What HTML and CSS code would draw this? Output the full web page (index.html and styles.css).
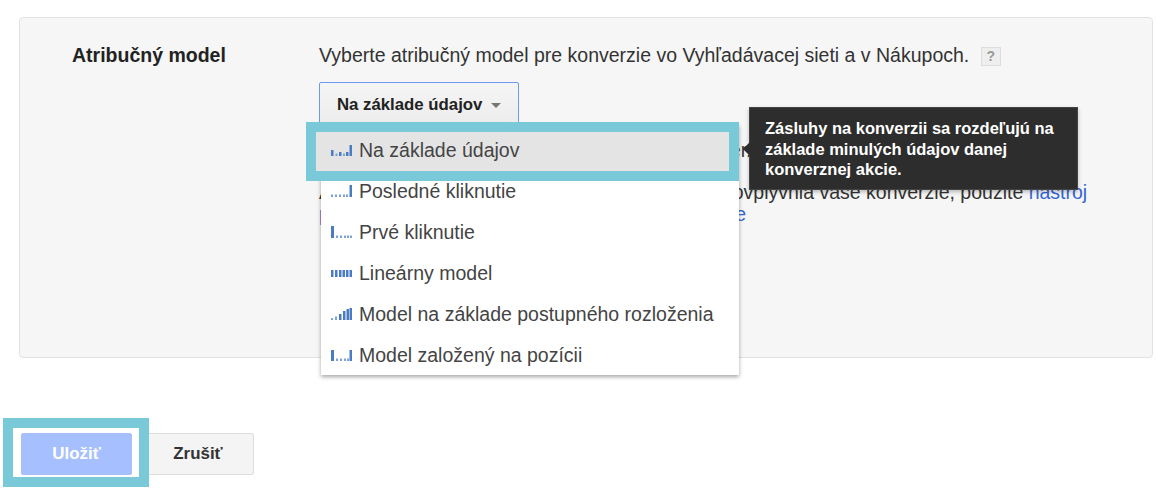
FILE: index.html
```html
<!DOCTYPE html>
<html lang="sk">
<head>
    <meta charset="UTF-8">
    <meta name="viewport" content="width=device-width, initial-scale=1.0">
    <title>Atribučný model</title>
    <link rel="stylesheet" href="styles.css">
</head>
<body>
    <div class="panel">
        <div class="panel-label">Atribučný model</div>
        <div class="panel-body">
            <div class="intro">
                Vyberte atribučný model pre konverzie vo Vyhľadávacej sieti a v Nákupoch.
                <span class="help">?</span>
            </div>
            <div class="dropdown">
                <button class="dropdown-btn">Na základe údajov <span class="caret"></span></button>

                <ul class="menu">
                    <li class="menu-item active">
                        <svg class="bars" viewBox="0 0 21 12"><rect x="0" y="6" width="2.500" height="6"/><rect class="dot" x="4.500" y="9.500" width="2" height="2.500"/><rect x="8" y="8" width="2.500" height="4"/><rect class="dot" x="12" y="9.500" width="2" height="2.500"/><rect x="15" y="8" width="2.500" height="4"/><rect x="18.500" y="1" width="2.500" height="11"/></svg>
                        Na základe údajov
                    </li>
                    <li class="menu-item">
                        <svg class="bars" viewBox="0 0 21 12"><rect class="dot" x="0" y="9.500" width="2" height="2.500"/><rect class="dot" x="4" y="9.500" width="2" height="2.500"/><rect class="dot" x="8" y="9.500" width="2" height="2.500"/><rect class="dot" x="12" y="9.500" width="2" height="2.500"/><rect class="dot" x="15" y="9.500" width="2" height="2.500"/><rect x="18.500" y="0" width="2.500" height="12"/></svg>
                        Posledné kliknutie
                    </li>
                    <li class="menu-item">
                        <svg class="bars" viewBox="0 0 21 12"><rect x="0" y="0" width="3" height="12"/><rect class="dot" x="5" y="9.500" width="2" height="2.500"/><rect class="dot" x="9" y="9.500" width="2" height="2.500"/><rect class="dot" x="13" y="9.500" width="2" height="2.500"/><rect class="dot" x="16" y="9.500" width="2" height="2.500"/><rect class="dot" x="19" y="9.500" width="2" height="2.500"/></svg>
                        Prvé kliknutie
                    </li>
                    <li class="menu-item">
                        <svg class="bars" viewBox="0 0 21 12"><rect x="0" y="3" width="2.500" height="7"/><rect x="4" y="3" width="2.500" height="7"/><rect x="8" y="3" width="2.500" height="7"/><rect x="11.500" y="3" width="2.500" height="7"/><rect x="15" y="3" width="2.500" height="7"/><rect x="18.500" y="3" width="2.500" height="7"/></svg>
                        Lineárny model
                    </li>
                    <li class="menu-item">
                        <svg class="bars" viewBox="0 0 21 12"><rect class="dot" x="0" y="10" width="2" height="2"/><rect class="dot" x="4" y="8.500" width="2" height="3.500"/><rect x="8" y="6" width="2.500" height="6"/><rect x="12" y="3" width="2.500" height="9"/><rect x="15.500" y="1" width="2.500" height="11"/><rect x="18.500" y="0" width="2.500" height="12"/></svg>
                        Model na základe postupného rozloženia
                    </li>
                    <li class="menu-item">
                        <svg class="bars" viewBox="0 0 21 12"><rect x="0" y="1" width="3" height="11"/><rect class="dot" x="5" y="9.500" width="2" height="2.500"/><rect class="dot" x="9" y="9.500" width="2" height="2.500"/><rect class="dot" x="13" y="9.500" width="2" height="2.500"/><rect class="dot" x="16" y="9.500" width="2" height="2.500"/><rect x="18.500" y="1" width="2.500" height="11"/></svg>
                        Model založený na pozícii
                    </li>
                </ul>

                <div class="tooltip">Zásluhy na konverzii sa rozdeľujú na základe minulých údajov danej konverznej akcie.</div>
            </div>
            <p class="note note-first">Atribučný model určuje, ako sa zásluhy za konverzie rozdelia <a href="#">medzi kliknutia</a></p>
            <p class="note">Ak chcete zistiť, ako by rôzne atribučné modely ovplyvňia vaše konverzie, použite <a href="#">nástroj porovnania atribučných modelov na ich konverzie</a></p>
        </div>
    </div>

    <div class="actions">
        <button class="btn btn-save">Uložiť</button>
        <button class="btn btn-cancel">Zrušiť</button>
    </div>

    <!-- annotation frames drawn on top of the screenshot -->
    <div class="frame frame-item"></div>
    <div class="frame frame-save"></div>
</body>
</html>
```

FILE: styles.css
```css
body {
    font-family: "Liberation Sans", Arial, sans-serif;
    background-color: #fff;
    color: #333;
    margin: 0;
    padding: 0;
    font-size: 19.5px;
    overflow: hidden;
}
.panel {
    display: flex;
    box-sizing: border-box;
    height: 341px;
    margin: 17px 4px 0 19px;
    padding: 26px 0 0 52px;
    background-color: #f6f6f6;
    border: 1px solid #e2e2e2;
    border-radius: 4px;
}
.panel-label {
    width: 247px;
    flex-shrink: 0;
    font-weight: bold;
    line-height: 22px;
    color: #222;
}
.panel-body {
    width: 772px;
    line-height: 22px;
}
.intro {
    height: 22px;
}
.help {
    display: inline-block;
    box-sizing: border-box;
    width: 20px;
    height: 19px;
    margin-left: 6px;
    border: 1px solid #ddd;
    background-color: #eee;
    color: #999;
    font-size: 14px;
    font-weight: bold;
    line-height: 17px;
    text-align: center;
    vertical-align: 1px;
}
.dropdown {
    position: relative;
    margin-top: 16px;
    height: 44px;
}
.dropdown-btn {
    box-sizing: border-box;
    width: 200px;
    height: 44px;
    padding: 1px 0 0;
    background: linear-gradient(#f5f5f5, #ececec);
    border: 1px solid #6b9cf0;
    border-radius: 2px;
    color: #222;
    font-family: inherit;
    font-size: 16.8px;
    font-weight: bold;
}
.caret {
    display: inline-block;
    width: 0;
    height: 0;
    margin-left: 4px;
    border-left: 5px solid transparent;
    border-right: 5px solid transparent;
    border-top: 5px solid #777;
    vertical-align: 2px;
}
.menu {
    position: absolute;
    top: 42px;
    left: 2px;
    box-sizing: border-box;
    width: 418px;
    height: 251px;
    margin: 0;
    padding: 5.500px 0 0;
    list-style: none;
    background-color: #fff;
    box-shadow: 0 2px 4px rgba(0, 0, 0, 0.35);
    z-index: 2;
}
.menu-item {
    display: flex;
    align-items: center;
    height: 41px;
    padding-left: 10px;
    gap: 7px;
    color: #444;
}
.menu-item.active {
    margin-left: -5px;
    padding-left: 15px;
    background-color: #e4e4e4;
}
.bars {
    width: 21px;
    height: 12px;
    flex-shrink: 0;
}
.bars rect {
    fill: #4a7cc4;
}
.bars .dot {
    fill: #7fa3d8;
}
.tooltip {
    position: absolute;
    top: 25px;
    left: 430px;
    box-sizing: border-box;
    width: 329px;
    height: 83px;
    padding: 10px 15px;
    background-color: #2d2d2d;
    border: 1px solid #444;
    box-shadow: 0 2px 4px rgba(0, 0, 0, 0.25);
    color: #fff;
    font-size: 16.500px;
    font-weight: bold;
    line-height: 20.500px;
    z-index: 3;
}
.tooltip:before {
    content: "";
    position: absolute;
    top: 34px;
    left: -7px;
    width: 0;
    height: 0;
    border-top: 7px solid transparent;
    border-bottom: 7px solid transparent;
    border-right: 7px solid #2d2d2d;
}
.note {
    margin: 0;
}
.note-first {
    margin-top: 13px;
    margin-bottom: 20px;
}
a {
    color: #3367d6;
    text-decoration: none;
}
.actions {
    display: flex;
    margin: 75px 0 0 21px;
}
.btn {
    box-sizing: border-box;
    height: 42px;
    border-radius: 2px;
    font-family: inherit;
    font-size: 16.900px;
    font-weight: bold;
}
.btn-save {
    width: 111px;
    background-color: #a6c0ff;
    border: 1px solid #a6c0ff;
    color: #fff;
}
.btn-cancel {
    width: 112px;
    margin-left: 10px;
    background-color: #f4f4f4;
    border: 1px solid #ddd;
    color: #333;
}
.frame {
    position: absolute;
    box-sizing: border-box;
    border: 10px solid #7ac9d9;
    z-index: 4;
}
.frame-item {
    top: 122px;
    left: 306px;
    width: 433px;
    height: 59px;
}
.frame-save {
    top: 418px;
    left: 3px;
    width: 146px;
    height: 69px;
}
```
